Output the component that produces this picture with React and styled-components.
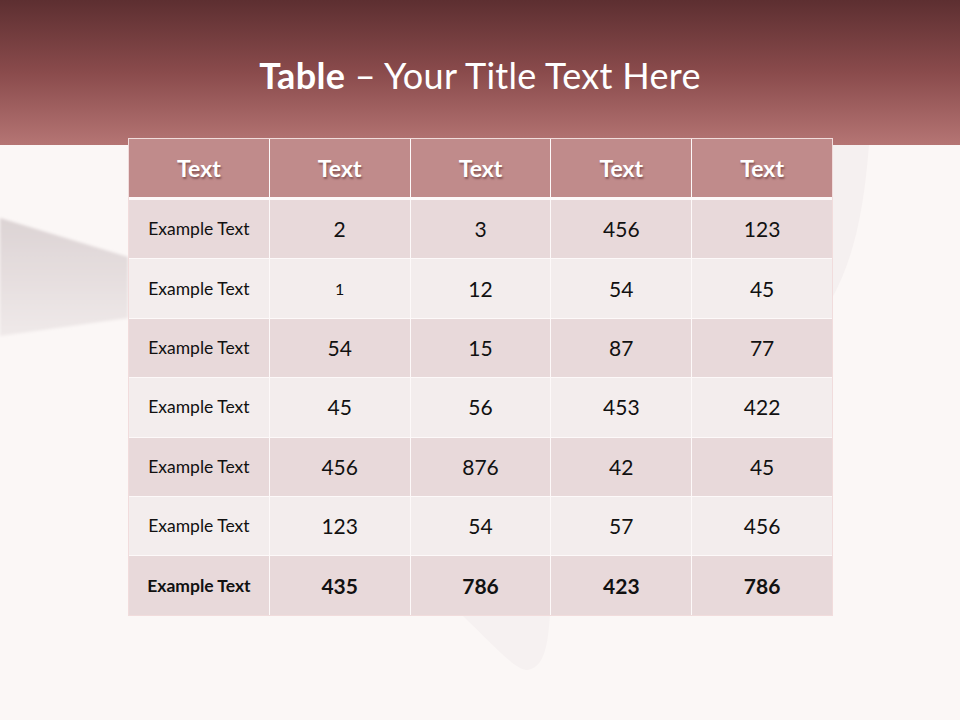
import styled, { createGlobalStyle } from "styled-components";

const Global = createGlobalStyle`
  html, body { margin: 0; padding: 0; }
  body { font-family: Lato, "Open Sans", sans-serif; background: #fbf7f6; }
`;

const Page = styled.div`
  position: relative;
  width: 960px;
  height: 720px;
  overflow: hidden;
  background: #fbf7f6;
  display: flex;
  flex-direction: column;
`;

const Backdrop = styled.svg`
  position: absolute;
  inset: 0;
  z-index: 0;
`;

const Banner = styled.header`
  position: relative;
  z-index: 1;
  height: 145px;
  flex-shrink: 0;
  background: linear-gradient(180deg, #5d2f31 0%, #8a4b4c 50%, #b57574 100%);
  display: flex;
  justify-content: center;
  padding-top: 53px;
  box-sizing: border-box;
`;

const Title = styled.h1`
  margin: 0;
  color: #fff;
  font-size: 36px;
  font-weight: 400;
  line-height: 44px;
  letter-spacing: 0.3px;
  b { font-weight: 700; }
`;

const Table = styled.div`
  position: relative;
  z-index: 2;
  width: 703px;
  margin: -7px 0 0 128px;
  background: #fdf9f9;
  border: 1px solid #f1dcdc;
  display: flex;
  flex-direction: column;
  gap: 3px;
`;

const Grid = styled.div`
  display: grid;
  grid-template-columns: repeat(5, 1fr);
  grid-auto-rows: ${(p) => p.$row}px;
  gap: 1px;
`;

const HeadCell = styled.div`
  background: #c08b8b;
  color: #fff;
  font-weight: 700;
  font-size: 23px;
  display: flex;
  align-items: center;
  justify-content: center;
  text-shadow: 1px 2px 2px rgba(60, 20, 20, 0.45);
`;

const Cell = styled.div`
  background: ${(p) => (p.$odd ? "#e8d9da" : "#f3eded")};
  color: #111;
  font-size: ${(p) => (p.$label ? 17.5 : p.$small ? 16 : 21)}px;
  font-weight: ${(p) => (p.$bold ? 700 : 400)};
  display: flex;
  align-items: center;
  justify-content: center;
  padding-bottom: 1px;
  box-sizing: border-box;
`;

const rows = [
  ["2", "3", "456", "123"],
  ["1", "12", "54", "45"],
  ["54", "15", "87", "77"],
  ["45", "56", "453", "422"],
  ["456", "876", "42", "45"],
  ["123", "54", "57", "456"],
  ["435", "786", "423", "786"],
];

export default function App() {
  return (
    <Page>
      <Global />
      <Backdrop viewBox="0 0 960 720" width="960" height="720">
        <defs>
          <linearGradient id="wedge" x1="0" y1="0" x2="0" y2="1">
            <stop offset="0" stopColor="#dcd3d4" />
            <stop offset="1" stopColor="#efe9e9" />
          </linearGradient>
          <filter id="soft">
            <feGaussianBlur stdDeviation="1.5" />
          </filter>
        </defs>
        <path d="M0 218 L128 257 L128 318 L0 336 Z" fill="url(#wedge)" filter="url(#soft)" />
        <path d="M831 145 L869 145 C864 205 856 255 831 300 Z" fill="#f5f0f0" />
        <path d="M462 615 L550 615 C548 640 546 668 527 670 C516 670 498 650 462 615 Z" fill="#f6f1f1" />
      </Backdrop>
      <Banner>
        <Title>
          <b>Table</b> – Your Title Text Here
        </Title>
      </Banner>
      <Table>
        <Grid $row={58}>
          {["Text", "Text", "Text", "Text", "Text"].map((t, i) => (
            <HeadCell key={i}>{t}</HeadCell>
          ))}
        </Grid>
        <Grid $row={58.4}>
          {rows.map((r, i) => {
            const last = i === rows.length - 1;
            return [
              <Cell key={i + "l"} $odd={i % 2 === 0} $label $bold={last}>
                Example Text
              </Cell>,
              ...r.map((v, j) => (
                <Cell
                  key={i + "-" + j}
                  $odd={i % 2 === 0}
                  $bold={last}
                  $small={i === 1 && j === 0}
                >
                  {v}
                </Cell>
              )),
            ];
          })}
        </Grid>
      </Table>
    </Page>
  );
}
